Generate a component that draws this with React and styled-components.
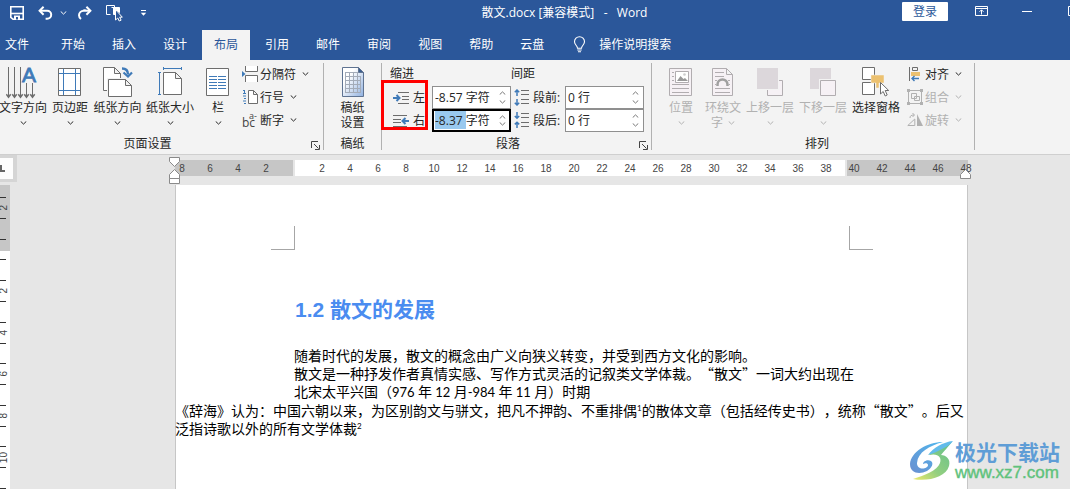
import React from 'react';
import { useEffect, useRef } from 'react';
import styled, { createGlobalStyle } from 'styled-components';

const GlobalStyle = createGlobalStyle`
    * {
        box-sizing: border-box;
    }

    body {
        margin: 0;
        overflow: hidden;
        background: #e6e6e6;
        font-family: "Open Sans", "Noto Sans CJK SC", sans-serif;
        font-size: 12px;
        color: #262626;
        text-spacing-trim: space-all;
    }

    button, input {
        font: inherit;
        color: inherit;
        margin: 0;
        padding: 0;
        border: none;
        background: none;
    }

    svg {
        display: block;
        flex: none;
    }
`;

const Window = styled.div`
    display: flex;
    flex-direction: column;
    height: 100vh;
    overflow: hidden;
`;

/* ---------- title bar ---------- */

const TitleBar = styled.header`
    display: flex;
    flex: none;
    align-items: flex-start;
    height: 30px;
    overflow: hidden;
    background: #2b579a;
    color: white;
`;

const QuickAccess = styled.div`
    display: flex;
    align-items: center;
    height: 26px;
    padding-left: 5px;
`;

const QuickButton = styled.button`
    display: flex;
    justify-content: center;
    width: ${({ $width }) => $width}px;
    color: white;
`;

const Title = styled.h1`
    flex: 1;
    margin: 0;
    padding-left: 66px;
    font-size: 12px;
    font-weight: normal;
    line-height: 26px;
    text-align: center;
    white-space: pre;
`;

const LoginButton = styled.button`
    width: 46px;
    height: 19px;
    margin: 2px 10px 0 0;
    border-radius: 1px;
    background: white;
    color: #2b579a;
    line-height: 19px;
`;

const WindowButtons = styled.div`
    display: flex;
    margin-right: -26px;
`;

const WindowButton = styled.button`
    display: flex;
    align-items: center;
    justify-content: center;
    width: 46px;
    height: 22px;
    color: white;
`;

/* ---------- tabs ---------- */

const TabBar = styled.nav`
    display: flex;
    flex: none;
    gap: 3px;
    height: 30px;
    background: #2b579a;
`;

const Tab = styled.button`
    height: 30px;
    padding: ${({ $file }) => ($file ? '0 17px 0 5px' : '0 12px')};
    background: ${({ $active }) => ($active ? '#f3f3f3' : 'transparent')};
    color: ${({ $active }) => ($active ? '#2b579a' : 'white')};
    line-height: 28px;
    white-space: nowrap;
`;

const TellMe = styled.button`
    display: flex;
    align-items: center;
    gap: 13px;
    height: 28px;
    margin-left: 14px;
    color: white;
    white-space: nowrap;
`;

/* ---------- ribbon ---------- */

const RibbonBar = styled.div`
    display: flex;
    flex: none;
    height: 95px;
    padding: 3px 0 4px;
    border-bottom: 1px solid #cfcfcf;
    background: #f3f3f3;
`;

const Group = styled.section`
    display: flex;
    flex: none;
    flex-direction: column;
    padding: 0 ${({ $right }) => $right || 0}px 0 ${({ $left }) => $left || 0}px;
    border-right: 1px solid #b1b1b1;
`;

const GroupBody = styled.div`
    display: flex;
    flex: 1;
`;

const GroupFooter = styled.div`
    display: flex;
    justify-content: center;
    height: 14px;
    line-height: 16px;
`;

const GroupLabel = styled.span`
    flex: 1;
    padding-right: ${({ $shift }) => $shift || 0}px;
    text-align: center;
`;

const Launcher = styled.button`
    align-self: flex-end;
    width: 9px;
    height: 9px;
    color: #444;
`;

const BigButton = styled.button`
    display: flex;
    flex-direction: column;
    align-items: center;
    width: ${({ $width }) => $width}px;
    height: 69px;
    padding-top: 4px;
    white-space: nowrap;
    color: ${({ disabled }) => (disabled ? '#b1b1b1' : '#262626')};
`;

const BigIcon = styled.span`
    display: flex;
    align-items: flex-start;
    height: 33px;
`;

const BigLabel = styled.span`
    display: flex;
    align-items: center;
    gap: 5px;
    height: 15px;
    line-height: 15px;
`;

const SmallColumn = styled.div`
    display: flex;
    flex-direction: column;
    margin-left: ${({ $left }) => $left}px;
    padding-right: 11px;
    width: ${({ $width }) => $width}px;
`;

const SmallButton = styled.button`
    display: flex;
    align-items: center;
    gap: 2px;
    height: 23px;
    padding-bottom: 2px;
    white-space: nowrap;
    color: ${({ disabled }) => (disabled ? '#b1b1b1' : '#262626')};
`;

const ChevronBox = styled.span`
    display: flex;
    padding-left: 4px;
`;

const FieldColumn = styled.div`
    position: relative;
    display: flex;
    flex-direction: column;
    width: ${({ $width }) => $width}px;
    padding-right: ${({ $right }) => $right || 0}px;
`;

const FieldHead = styled.span`
    height: 23px;
    line-height: 22px;
`;

const FieldRow = styled.div`
    display: flex;
    align-items: center;
    height: 23px;
    padding-left: 3px;
    gap: 3px;
`;

const FieldLabel = styled.label`
    flex: 1;
    padding-bottom: 2px;
    white-space: nowrap;
`;

const SpinBox = styled.div`
    display: flex;
    width: 79px;
    height: 23px;
    border: ${({ $focused }) => ($focused ? '2px solid black' : '1px solid #8f8f8f')};
    background: white;
`;

const SpinInput = styled.input`
    flex: 1;
    min-width: 0;
    padding: 0 0 2px ${({ $focused }) => ($focused ? 1 : 2)}px;
    outline: none;

    &::selection {
        background: #99c9ef;
        color: #262626;
    }
`;

const SpinArrows = styled.span`
    display: flex;
    flex-direction: column;
    justify-content: space-evenly;
    padding-right: ${({ $focused }) => ($focused ? 3 : 4)}px;
    color: #777;
`;

const Highlight = styled.div`
    position: absolute;
    left: -9px;
    top: 17px;
    width: 47px;
    height: 50px;
    border: 3px solid #ff0000;
    pointer-events: none;
`;

/* ---------- workspace ---------- */

const Workspace = styled.main`
    position: relative;
    display: flex;
    flex: 1;
    min-height: 0;
    overflow: hidden;
`;

const SideColumn = styled.div`
    display: flex;
    flex-direction: column;
    width: 17px;
`;

const TabSelector = styled.button`
    display: flex;
    flex: none;
    align-items: center;
    width: 17px;
    height: 27px;
    border: solid #d5d5d5;
    border-width: 3px 4px 3px 0;
    background: #fdfdfd;
`;

const VerticalRuler = styled.div`
    flex: 1;
    width: 10px;
    min-height: 0;
    margin-top: 3px;
    background: linear-gradient(#c6c6c6 66px, white 66px);
`;

const VerticalLead = styled.div`
    width: 6px;
    height: 13px;
    border-bottom: 1px solid #333;
`;

const VerticalCells = styled.div`
    display: grid;
    grid-template-rows: repeat(14, 1fr);
    height: 291px;
`;

const VerticalCell = styled.div`
    display: flex;
    align-items: center;
    justify-content: center;
    width: 6px;
    border-bottom: 1px solid #333;
    font: 10px "Liberation Sans", sans-serif;
    color: #444;

    span {
        writing-mode: vertical-rl;
        transform: rotate(180deg);
    }
`;

const DocumentColumn = styled.div`
    display: flex;
    flex: 1;
    flex-direction: column;
    margin: 0 102px 0 158px;
`;

const HorizontalRuler = styled.div`
    position: relative;
    display: flex;
    flex: none;
    gap: 2px;
    height: 16px;
    margin: 5px 0 9px;
    font: 10px/17px "Liberation Sans", sans-serif;
    color: #444;
`;

const RulerPart = styled.div`
    display: flex;
    flex: ${({ $width }) => ($width ? `0 0 ${$width}px` : '1')};
    min-width: 0;
    justify-content: ${({ $end }) => ($end ? 'flex-end' : 'flex-start')};
    padding: ${({ $end, $margin }) => ($margin ? ($end ? '0 13px 0 0' : '0') : '0 0 0 13px')};
    background: ${({ $margin }) => ($margin ? '#c6c6c6' : 'white')};
`;

const RulerNumber = styled.span`
    flex: none;
    width: 28px;
    text-align: center;

    &:first-child {
        margin-left: ${({ $pull }) => ($pull ? '-7px' : '0')};
    }
`;

const Marker = styled.svg`
    position: absolute;
    top: ${({ $top }) => $top}px;
    ${({ $right }) => ($right ? 'right: -3px;' : 'left: -6px;')}
`;

const Sheet = styled.article`
    flex: 1;
    border: solid #c6c6c6;
    border-width: 0 1px;
    background: white;
    color: black;
`;

const Corners = styled.div`
    display: flex;
    justify-content: space-between;
    padding: 41px 94px 0 95px;
`;

const Corner = styled.div`
    width: 24px;
    height: 24px;
    border-bottom: 1px solid #a6a6a6;
    ${({ $side }) => ($side === 'left' ? 'border-right' : 'border-left')}: 1px solid #a6a6a6;
`;

const Heading = styled.h2`
    margin: 45px 0 0 119px;
    font: bold 21px/30px "Liberation Sans", "Noto Sans CJK SC", sans-serif;
    color: #4a8cf0;
`;

const Paragraph = styled.p`
    margin: ${({ $first }) => ($first ? '21px' : '0')} 0 0 ${({ $indent }) => ($indent ? '118px' : '-1px')};
    font: 14px/18px "Noto Sans CJK SC", sans-serif;
    white-space: nowrap;
`;

const Latin = styled.span`
    font-family: Lato, sans-serif;
    font-size: 13px;
`;

const Note = styled.sup`
    font: 8px/8px Lato, sans-serif;
    vertical-align: 5px;
`;

const Watermark = styled.aside`
    position: absolute;
    right: 10px;
    bottom: 6px;
    display: flex;
    align-items: center;
`;

const WatermarkText = styled.div`
    display: flex;
    flex-direction: column;
    font: bold 21px/23px "Noto Sans CJK SC", sans-serif;
    color: #5f9dd6;
`;

const WatermarkUrl = styled.span`
    font: 17px/19px "Liberation Sans", sans-serif;
    color: #5fc27c;
    -webkit-text-stroke: 0.4px #5fc27c;
`;

/* ---------- icons ---------- */

const GRAY = '#6d6d6d';
const BLUE = '#3f7ab8';

const Chevron = ({ up }) => (
    <svg width="7" height="4" viewBox="0 0 7 4" fill="none" stroke="currentColor">
        <path d={up ? 'M.7 3.6 3.5.9l2.8 2.7' : 'M.7.4l2.8 2.7L6.3.4'} />
    </svg>
);

const SaveIcon = () => (
    <svg width="14" height="14" viewBox="0 0 14 14" fill="none" stroke="currentColor" strokeWidth="1.6">
        <path d="M.8.8h12.4v12.4H3L.8 11.4z" />
        <path d="M1 7.5h12" />
        <path d="M4 13.5v-4h6v4z" fill="currentColor" stroke="none" />
        <path d="M6 11h2v2.500H6z" fill="#2b579a" stroke="none" />
    </svg>
);

const UndoIcon = ({ flip }) => (
    <svg width="15" height="14" viewBox="0 0 15 14" fill="none" stroke="currentColor" strokeWidth="2">
        <g transform={flip ? 'translate(15 0) scale(-1 1)' : undefined}>
            <path d="M5.6.8 1.6 4.8l4 4" />
            {flip
                ? <path d="M2 4.8h7.2a4.200 4.200 0 0 0-4 0M2 4.800h6.500a4.600 4.600 0 0 1 4.500 4.500c0 1.500-.7 2.700-2 3.700" />
                : <path d="M2 4.8h7.2a4 4 0 0 1 0 8H7.6" />}
        </g>
    </svg>
);

const TouchIcon = () => (
    <svg width="18" height="17" viewBox="0 0 18 17" fill="none" stroke="currentColor">
        <path d="M4.5 9.5h-4v-9h8v2" />
        <path d="M5.5 2.5h8v5l-3-3v5h-3V3" fill="currentColor" />
        <path d="M9.5 4.5v10.500l2.300-2 1.400 3 1.900-.8-1.400-3h2.600z" fill="#2b579a" />
    </svg>
);

const CustomizeIcon = () => (
    <svg width="7" height="6" viewBox="0 0 7 6">
        <path d="M1 0h5v1H1zM.8 2.8h5.4L3.5 5.8z" fill="currentColor" />
    </svg>
);

const RibbonOptionsIcon = () => (
    <svg width="13" height="10" viewBox="0 0 13 10" fill="none" stroke="currentColor">
        <path d="M.5.5h12v9H.5zM.5 2.5h12M6.5 8.5V4M4.5 5.8l2-2 2 2" />
    </svg>
);

const BulbIcon = () => (
    <svg width="13" height="17" viewBox="0 0 13 17" fill="none" stroke="currentColor" strokeWidth="1.1">
        <path d="M4.5 12.3c0-2.7-3-3.5-3-6.6a5 5 0 0 1 10 0c0 3.1-3 3.9-3 6.6zM4.3 14h4.4M5 15.8h3" />
    </svg>
);

const LauncherIcon = () => (
    <svg width="9" height="9" viewBox="0 0 9 9" fill="none" stroke="currentColor">
        <path d="M.5 7V.5H7M3 3l4.5 4.5M8.5 4v4.5H4" />
    </svg>
);

const TextDirectionIcon = () => (
    <svg width="34" height="32" viewBox="0 0 34 32" fill="none" stroke={GRAY}>
        <path d="M2.5 0v30M8.5 0v30M14.5 0v30M20.5 16v14M26.5 16v14" />
        <path
            d="M.3 27.2l2.2 3 2.2-3M6.3 27.2l2.2 3 2.2-3M12.3 27.2l2.2 3 2.2-3M18.3 27.2l2.2 3 2.2-3M24.3 27.2l2.2 3 2.2-3"
            strokeWidth="1.5"
        />
        <text x="16" y="15" fontFamily="Liberation Sans, sans-serif" fontSize="21" fill={BLUE} stroke={BLUE} strokeWidth=".8">A</text>
    </svg>
);

const MarginsIcon = () => (
    <svg width="24" height="32" viewBox="0 0 24 32" fill="none" stroke={GRAY}>
        <path d="M.5 1.5h22v27H.5z" fill="white" />
        <path d="M5.5 2v26M17.5 2v26M1 6.5h21M1 23.5h21" stroke={BLUE} />
    </svg>
);

const OrientationIcon = () => (
    <svg width="30" height="32" viewBox="0 0 30 32" fill="none" stroke={GRAY}>
        <path d="M.5.5h11l6 6v17H.5zM11.5.5v6h6" fill="white" />
        <path d="M4 11h20v19H4z" fill="#f3f3f3" stroke="none" />
        <path d="M5.5 12.5h17l6 6v11h-23zM22.5 12.5v6h6" fill="white" />
        <path d="M19 1.5c4 0 6 2 6 6" stroke={BLUE} strokeWidth="2.4" />
        <path d="M20.5 5.5 25 9.5l4-4" stroke={BLUE} strokeWidth="2.2" />
    </svg>
);

const SizeIcon = () => (
    <svg width="24" height="32" viewBox="0 0 24 32" fill="none" stroke={GRAY}>
        <path d="M5.5 5.5h12l6 6v16h-18zM17.5 5.5v6h6" fill="white" />
        <path d="M5.5 1.5h18M5.5 0v3M23.5 0v3M1.5 5.5v22M0 5.5h3M0 27.5h3" stroke={BLUE} />
    </svg>
);

const ColumnsIcon = () => (
    <svg width="24" height="32" viewBox="0 0 24 32" fill="none" stroke={GRAY}>
        <path d="M.5 1.5h22v27H.5z" fill="white" />
        <path
            d="M3 9.5h8M12 9.5h8M3 12.5h8M12 12.5h8M3 15.5h8M12 15.5h8M3 18.5h8M12 18.5h8M3 21.5h8M12 21.5h8"
            stroke={BLUE}
        />
    </svg>
);

const BreaksIcon = () => (
    <svg width="16" height="16" viewBox="0 0 16 16" fill="none" stroke={GRAY}>
        <path d="M0 5v6l3.500-3z" fill={BLUE} stroke="none" />
        <path d="M3.5 0v5.5h12V0M3.5 16V9.5h12V16" fill="white" />
    </svg>
);

const LineNumbersIcon = () => (
    <svg width="16" height="16" viewBox="0 0 16 16" fill="none" stroke={GRAY}>
        <path d="M6.5 1.5h5l4 4v9h-9zM11.5 1.5v4h4" fill="white" />
        <path d="M1 1.500h2M2.500 1v3M1 4.500h3M1 7h3M2 9.500h2M1 12h3M2 14.500h2" stroke={BLUE} />
    </svg>
);

const HyphenationIcon = () => (
    <svg width="16" height="16" viewBox="0 0 16 16" fill="#444" fontFamily="Open Sans, sans-serif">
        <text x="0" y="15" fontSize="12">bc</text>
        <text x="7" y="7" fontSize="9" overflow="visible">a-</text>
    </svg>
);

const DraftPaperIcon = () => (
    <svg width="24" height="32" viewBox="0 0 24 32" fill="none" stroke="#5f7391">
        <defs>
            <linearGradient id="paper" x1="0" y1="0" x2="1" y2="1">
                <stop offset="0.3" stopColor="white" />
                <stop offset="1" stopColor="#8fb0e0" />
            </linearGradient>
        </defs>
        <path d="M1.5.5h16l5 5v24h-21z" fill="url(#paper)" />
        <path d="M17.5.5v5h5z" fill="#3d5f8f" />
        <path
            d="M4.5 5.5h12M4.5 9.5h15M4.5 13.5h15M4.5 17.5h15M4.5 21.5h15M4.5 25.5h15M4.5 5v21M8.5 5v21M12.5 5v21M16.5 5v21M19.5 9v17"
            stroke="#a3abb8"
        />
    </svg>
);

const IndentIcon = ({ right }) => (
    <svg width="17" height="14" viewBox="0 0 17 14" fill="none" stroke={GRAY}>
        {right ? (
            <>
                <path d="M0 1.5h14M0 5.5h8M0 8.5h8M0 12.5h14" />
                <path d="M16 7h-6M12.5 4l-3 3 3 3" stroke={BLUE} strokeWidth="2" />
            </>
        ) : (
            <>
                <path d="M5 1.5h11M9 5.5h7M9 8.5h7M5 12.5h11" />
                <path d="M0 7h6.5M3.5 4l3 3-3 3" stroke={BLUE} strokeWidth="2" />
            </>
        )}
    </svg>
);

const SpacingIcon = ({ after }) => (
    <svg width="16" height="17" viewBox="0 0 16 17" fill="none" stroke={GRAY}>
        <path d="M7 1.5h8M7 5.5h8M7 10.5h8M7 14.5h8" />
        <path
            d={after
                ? 'M3 0v6M.8 4 3 6.2 5.2 4M3 16v-6M.8 12.4 3 10.2l2.2 2.2'
                : 'M3 7V1M.8 3.2 3 1l2.2 2.2M3 10v6M.8 13.8 3 16l2.2-2.2'}
            stroke={BLUE}
            strokeWidth="1.5"
        />
    </svg>
);

const PositionIcon = () => (
    <svg width="24" height="32" viewBox="0 0 24 32" fill="none" stroke="#b1adb0">
        <path d="M.5 1.5h22v27H.5z" fill="#f6f1f5" />
        <path d="M3 5.5h2M3 9.5h2M3 13.5h2M3 17.5h17M3 21.5h17M3 25.5h17" />
        <path d="M6.5 4.5h13v11h-13z" fill="white" />
        <path d="M8 14l3.5-5 3 3 1.5-1 3 3z" fill="#999" stroke="none" />
        <circle cx="15.5" cy="7.5" r="1.3" fill="#ccc" stroke="none" />
    </svg>
);

const WrapIcon = () => (
    <svg width="22" height="32" viewBox="0 0 22 32" fill="none" stroke="#b1adb0">
        <path d="M.5 1.5h14l6 6v21H.5zM14.5 1.5v6h6" fill="#f6f1f5" />
        <path d="M3 5.5h9M3 9.5h9M3 13.5h2M16 13.5h2M3 17.5h1M17 17.5h1M3 21.5h15M3 25.5h15" />
        <path d="M5.5 19v-1.500a5 5 0 0 1 10 0V19" stroke="#a0a0a0" strokeWidth="2.5" />
    </svg>
);

const ForwardIcon = () => (
    <svg width="27" height="32" viewBox="0 0 27 32" stroke="#b1adb0">
        <path d="M10.5 13.5h15v15h-15z" fill="#f6f1f5" />
        <path d="M0 1h22v22H0z" fill="#f3f3f3" stroke="none" />
        <path d="M0 1h21v21H0z" fill="#dcd7db" stroke="none" />
    </svg>
);

const BackwardIcon = () => (
    <svg width="27" height="32" viewBox="0 0 27 32" stroke="#b1adb0">
        <path d="M0 1h21v21H0z" fill="#dcd7db" stroke="none" />
        <path d="M9 12h17v17H9z" fill="#f3f3f3" stroke="none" />
        <path d="M10.5 13.5h15v15h-15z" fill="#f6f1f5" />
    </svg>
);

const SelectionPaneIcon = () => (
    <svg width="28" height="32" viewBox="0 0 28 32" stroke={GRAY}>
        <path d="M.5.5h12v12H.5zM.5 15.5h12v12H.5z" fill="white" />
        <path d="M9 8h13v8h-5v5h-3v-5H9z" fill="#ecc170" stroke="#f3f3f3" strokeWidth=".5" />
        <path d="M18.5 15.500v11.500l2.700-2.500 2 4.500 2-1-2-4.500h3.500z" fill="white" />
    </svg>
);

const AlignIcon = () => (
    <svg width="16" height="16" viewBox="0 0 16 16" fill="none" stroke={GRAY}>
        <path d="M2.5 1v14M5.5 1.5h5v3h-5z" />
        <path d="M4 6h9v4H4z" fill="#ecc170" stroke="none" />
        <path d="M12 12.5H5M7.5 10 5 12.5 7.500 15" stroke={BLUE} strokeWidth="1.4" />
    </svg>
);

const GroupIcon = () => (
    <svg width="16" height="16" viewBox="0 0 16 16" fill="none" stroke="#b1b1b1">
        <path d="M1.5 1.5h13v13h-13zM4.5 4.5h5v5h-5zM7.5 7.5h5v4h-5z" />
        <path d="M0 0h3v3H0zM13 0h3v3h-3zM0 13h3v3H0zM13 13h3v3h-3z" fill="#b1b1b1" stroke="none" />
    </svg>
);

const RotateIcon = () => (
    <svg width="16" height="14" viewBox="0 0 16 14" fill="none" stroke="#b1b1b1">
        <path d="M.8 12.5h7V6z" />
        <path d="M10 1v12h6z" fill="#b1b1b1" stroke="none" />
        <path d="M3 5c0-2 1-3 4-3M5.5 0l2 2-2 2" />
    </svg>
);

const WatermarkLogo = () => (
    <svg width="46" height="44" viewBox="0 0 46 44">
        <defs>
            <linearGradient id="swooshTop" x1="1" y1="0" x2="0" y2="1">
                <stop offset="0" stopColor="#4fb8ee" />
                <stop offset="1" stopColor="#6a8fd0" />
            </linearGradient>
            <linearGradient id="swooshBottom" x1="1" y1="0" x2="0" y2="1">
                <stop offset="0" stopColor="#63c08c" />
                <stop offset="0.6" stopColor="#93cf80" />
                <stop offset="1" stopColor="#eee96a" />
            </linearGradient>
        </defs>
        <path
            d="M34 3C18 3 2 13 1 25c0 9 9 11 17 7 5-3 7-8 4-10-3-2-8 0-8 3 2-1 5-1 5 1 0 4-11 6-11-2C9 13 20 7 34 3z"
            fill="url(#swooshTop)"
        />
        <path
            d="M43 3C34 5 24 10 20 16c9-2 13 2 11 8-3 8-15 12-27 16 15 3 33-2 36-13 2-7-3-11-8-11 3-4 7-8 11-13z"
            fill="url(#swooshBottom)"
        />
        <path d="M44 2C34 3 24 9 19 16c7-2 10-4 14-6 4-2 8-4 11-8z" fill="#62bbea" />
    </svg>
);

/* ---------- data ---------- */

const tabs = ['开始', '插入', '设计', '布局', '引用', '邮件', '审阅', '视图', '帮助', '云盘'];

const pageSetup = [
    { label: '文字方向', width: 46, icon: <TextDirectionIcon /> },
    { label: '页边距', width: 48, icon: <MarginsIcon /> },
    { label: '纸张方向', width: 47, icon: <OrientationIcon /> },
    { label: '纸张大小', width: 58, icon: <SizeIcon /> },
    { label: '栏', width: 38, icon: <ColumnsIcon /> },
];

const pageSetupSmall = [
    { label: '分隔符', icon: <BreaksIcon /> },
    { label: '行号', icon: <LineNumbersIcon /> },
    { label: '断字', icon: <HyphenationIcon /> },
];

const arrange = [
    { label: '位置', width: 42, icon: <PositionIcon />, disabled: true },
    { label: '环绕文', second: '字', width: 42, icon: <WrapIcon />, disabled: true },
    { label: '上移一层', width: 52, icon: <ForwardIcon />, disabled: true },
    { label: '下移一层', width: 54, icon: <BackwardIcon />, disabled: true },
    { label: '选择窗格', width: 52, icon: <SelectionPaneIcon />, plain: true },
];

const arrangeSmall = [
    { label: '对齐', icon: <AlignIcon /> },
    { label: '组合', icon: <GroupIcon />, disabled: true },
    { label: '旋转', icon: <RotateIcon />, disabled: true },
];

const rulerLeft = [8, 6, 4, 2];
const rulerMiddle = Array.from({ length: 19 }, (_, i) => (i + 1) * 2);
const rulerRight = [40, 42, 44, 46, 48];
const verticalNumbers = ['2', '', '', '', '2', '', '4', '', '6', '', '8', '', '10', ''];

/* ---------- components ---------- */

function LargeCommand({ label, second, icon, width, disabled, plain }) {
    return (
        <BigButton $width={width} disabled={disabled}>
            <BigIcon>{icon}</BigIcon>
            <BigLabel>{label}</BigLabel>
            <BigLabel>
                {second}
                {!plain && <Chevron />}
            </BigLabel>
        </BigButton>
    );
}

function SmallCommands({ items, left, width }) {
    return (
        <SmallColumn $left={left} $width={width}>
            {items.map((d) => (
                <SmallButton key={d.label} disabled={d.disabled}>
                    {d.icon}
                    {d.label}
                    <ChevronBox><Chevron /></ChevronBox>
                </SmallButton>
            ))}
        </SmallColumn>
    );
}

function SpinField({ id, label, icon, value, focused }) {
    const input = useRef(null);

    useEffect(() => {
        if (focused) {
            input.current.focus();
            input.current.setSelectionRange(0, value.indexOf(' ') + 1);
        }
    }, [focused, value]);

    return (
        <FieldRow>
            {icon}
            <FieldLabel htmlFor={id}>{label}</FieldLabel>
            <SpinBox $focused={focused}>
                <SpinInput id={id} ref={input} defaultValue={value} $focused={focused} />
                <SpinArrows $focused={focused}>
                    <button aria-label="+"><Chevron up /></button>
                    <button aria-label="-"><Chevron /></button>
                </SpinArrows>
            </SpinBox>
        </FieldRow>
    );
}

function Ribbon() {
    return (
        <RibbonBar>
            <Group $right={3}>
                <GroupBody>
                    {pageSetup.map((d) => <LargeCommand key={d.label} {...d} />)}
                    <SmallCommands items={pageSetupSmall} left={5} width={78} />
                </GroupBody>
                <GroupFooter>
                    <GroupLabel $shift={16}>页面设置</GroupLabel>
                    <Launcher aria-label="页面设置"><LauncherIcon /></Launcher>
                </GroupFooter>
            </Group>
            <Group>
                <GroupBody>
                    <LargeCommand label="稿纸" second="设置" icon={<DraftPaperIcon />} width={57} plain />
                </GroupBody>
                <GroupFooter><GroupLabel>稿纸</GroupLabel></GroupFooter>
            </Group>
            <Group $left={8} $right={3}>
                <GroupBody>
                    <FieldColumn $width={121}>
                        <FieldHead>缩进</FieldHead>
                        <SpinField id="indent-left" label="左:" icon={<IndentIcon />} value="-8.57 字符" />
                        <SpinField id="indent-right" label="右:" icon={<IndentIcon right />} value="-8.37 字符" focused />
                        <Highlight />
                    </FieldColumn>
                    <FieldColumn $width={137} $right={4}>
                        <FieldHead>间距</FieldHead>
                        <SpinField id="space-before" label="段前:" icon={<SpacingIcon />} value="0 行" />
                        <SpinField id="space-after" label="段后:" icon={<SpacingIcon after />} value="0 行" />
                    </FieldColumn>
                </GroupBody>
                <GroupFooter>
                    <GroupLabel $shift={13}>段落</GroupLabel>
                    <Launcher aria-label="段落"><LauncherIcon /></Launcher>
                </GroupFooter>
            </Group>
            <Group $left={8}>
                <GroupBody>
                    {arrange.map((d) => <LargeCommand key={d.label} {...d} />)}
                    <SmallCommands items={arrangeSmall} left={5} width={67} />
                </GroupBody>
                <GroupFooter><GroupLabel>排列</GroupLabel></GroupFooter>
            </Group>
        </RibbonBar>
    );
}

function Ruler() {
    return (
        <HorizontalRuler>
            <RulerPart $width={118} $margin $end>
                {rulerLeft.map((n) => <RulerNumber key={n}>{n}</RulerNumber>)}
            </RulerPart>
            <RulerPart>
                {rulerMiddle.map((n) => <RulerNumber key={n}>{n}</RulerNumber>)}
            </RulerPart>
            <RulerPart $width={121} $margin>
                {rulerRight.map((n) => <RulerNumber key={n} $pull>{n}</RulerNumber>)}
            </RulerPart>
            <Marker $top={-3} width="11" height="28" viewBox="0 0 11 28" fill="white" stroke="#8a8a8a">
                <path d="M.5.5h10v4l-5 5-5-5zM.5 21.500v-4l5-5 5 5v4zM.5 21.5h10v5H.5z" />
            </Marker>
            <Marker $top={9} $right width="11" height="10" viewBox="0 0 11 10" fill="white" stroke="#8a8a8a">
                <path d="M.5 9.5v-4l5-5 5 5v4z" />
            </Marker>
        </HorizontalRuler>
    );
}

function Document() {
    return (
        <Sheet>
            <Corners>
                <Corner $side="left" />
                <Corner $side="right" />
            </Corners>
            <Heading>1.2 散文的发展</Heading>
            <Paragraph $indent $first>随着时代的发展，散文的概念由广义向狭义转变，并受到西方文化的影响。</Paragraph>
            <Paragraph $indent>
                散文是一种抒发作者真情实感、写作方式灵活的记叙类文学体裁。“散文”一词大约出现在
                <br />
                北宋太平兴国（<Latin>976 </Latin>年<Latin> 12 </Latin>月<Latin>-984 </Latin>年<Latin> 11 </Latin>月）时期
            </Paragraph>
            <Paragraph>
                《辞海》认为：中国六朝以来，为区别韵文与骈文，把凡不押韵、不重排偶<Note>1</Note>的散体文章（包括经传史书），统称“散文”。后又
                <br />
                泛指诗歌以外的所有文学体裁<Note>2</Note>
            </Paragraph>
        </Sheet>
    );
}

function App() {
    return (
        <Window>
            <GlobalStyle />
            <TitleBar>
                <QuickAccess>
                    <QuickButton $width={24} aria-label="保存"><SaveIcon /></QuickButton>
                    <QuickButton $width={33} aria-label="撤消"><UndoIcon /></QuickButton>
                    <QuickButton $width={2} aria-label="撤消列表"><Chevron /></QuickButton>
                    <QuickButton $width={41} aria-label="恢复"><UndoIcon flip /></QuickButton>
                    <QuickButton $width={20} aria-label="触摸/鼠标模式"><TouchIcon /></QuickButton>
                    <QuickButton $width={36} aria-label="自定义快速访问工具栏"><CustomizeIcon /></QuickButton>
                </QuickAccess>
                <Title>散文.docx [兼容模式]   -   Word</Title>
                <LoginButton>登录</LoginButton>
                <WindowButtons>
                    <WindowButton aria-label="功能区显示选项"><RibbonOptionsIcon /></WindowButton>
                    <WindowButton aria-label="最小化">
                        <svg width="10" height="1"><path d="M0 .5h10" stroke="currentColor" /></svg>
                    </WindowButton>
                    <WindowButton aria-label="最大化">
                        <svg width="10" height="10"><path d="M.5.5h9v9h-9z" fill="none" stroke="currentColor" /></svg>
                    </WindowButton>
                </WindowButtons>
            </TitleBar>
            <TabBar>
                <Tab $file>文件</Tab>
                {tabs.map((t) => <Tab key={t} $active={t === '布局'}>{t}</Tab>)}
                <TellMe><BulbIcon />操作说明搜索</TellMe>
            </TabBar>
            <Ribbon />
            <Workspace>
                <SideColumn>
                    <TabSelector aria-label="制表符">
                        <svg width="6" height="8"><path d="M1 0v6h4" fill="none" stroke="#666" strokeWidth="2" /></svg>
                    </TabSelector>
                    <VerticalRuler>
                        <VerticalLead />
                        <VerticalCells>
                            {verticalNumbers.map((n, i) => <VerticalCell key={i}><span>{n}</span></VerticalCell>)}
                        </VerticalCells>
                    </VerticalRuler>
                </SideColumn>
                <DocumentColumn>
                    <Ruler />
                    <Document />
                </DocumentColumn>
                <Watermark>
                    <WatermarkLogo />
                    <WatermarkText>
                        极光下载站
                        <WatermarkUrl>www.xz7.com</WatermarkUrl>
                    </WatermarkText>
                </Watermark>
            </Workspace>
        </Window>
    );
}

export default App;
